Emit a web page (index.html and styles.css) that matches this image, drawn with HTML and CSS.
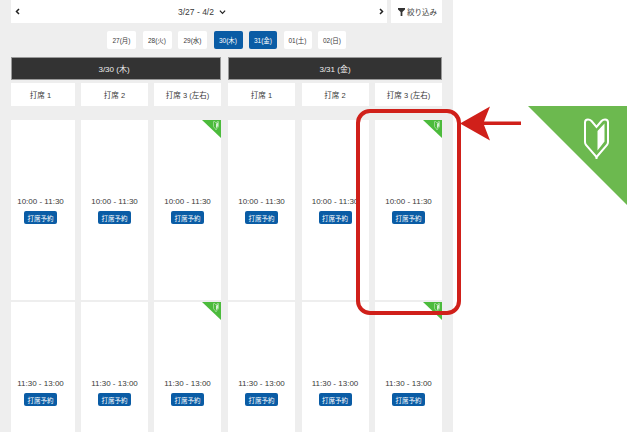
FILE: index.html
```html
<!DOCTYPE html>
<html lang="ja">
<head>
<meta charset="utf-8">
<title>打席予約</title>
<link rel="stylesheet" href="styles.css">
</head>
<body>
<svg class="defs" width="0" height="0">
  <symbol id="leaf" viewBox="0 0 27 41">
    <path d="M2 4.500 Q2 1.500 5 1.500 Q7 1.500 8.500 3 L13.500 9 L18.500 3 Q20 1.500 22 1.500 Q25 1.500 25 4.500 V24 Q25 25.500 24 27 L14 38.500 L13.500 39 L3 27 Q2 25.500 2 24 Z" fill="none" stroke="currentColor" stroke-width="2"/>
    <path d="M14.500 13 L21.500 5.500 V23.500 L14.500 32.500 V41 H12.500 V38 H14.500 Z" fill="currentColor"/>
  </symbol>
</svg>
<main class="page">
  <div class="topbar">
    <div class="weekbar">
      <svg class="nav" viewBox="0 0 5 7"><path d="M4 1 L1.500 3.500 L4 6" fill="none" stroke="#222" stroke-width="1.500"/></svg>
      <span class="range">3/27 - 4/2 <svg class="chev" viewBox="0 0 8 6"><path d="M1 1.500 L4 4.500 L7 1.500" fill="none" stroke="#222" stroke-width="1.400"/></svg></span>
      <svg class="nav" viewBox="0 0 5 7"><path d="M1 1 L3.500 3.500 L1 6" fill="none" stroke="#222" stroke-width="1.500"/></svg>
    </div>
    <div class="filter"><svg class="funnel" viewBox="0 0 8 9"><path d="M0 0 H8 V1.500 L5 4.500 V9 H3 V4.500 L0 1.500 Z" fill="#333"/></svg>絞り込み</div>
  </div>
  <div class="dates">
    <span class="pill">27(月)</span>
    <span class="pill">28(火)</span>
    <span class="pill">29(水)</span>
    <span class="pill on">30(木)</span>
    <span class="pill on narrow">31(金)</span>
    <span class="pill narrow">01(土)</span>
    <span class="pill narrow">02(日)</span>
  </div>
  <div class="days">
    <section class="day first">
      <h2 class="dayhead">3/30 (木)</h2>
      <div class="seat">打席 1</div><div class="seat">打席 2</div><div class="seat">打席 3 (左右)</div>
      <div class="slot s1"><span class="time">10:00 - 11:30</span><a class="book">打席予約</a></div>
      <div class="slot s1"><span class="time">10:00 - 11:30</span><a class="book">打席予約</a></div>
      <div class="slot s1"><i class="badge"><svg class="mini"><use href="#leaf"/></svg></i><span class="time">10:00 - 11:30</span><a class="book">打席予約</a></div>
      <div class="slot s2"><span class="time">11:30 - 13:00</span><a class="book">打席予約</a></div>
      <div class="slot s2"><span class="time">11:30 - 13:00</span><a class="book">打席予約</a></div>
      <div class="slot s2"><i class="badge"><svg class="mini"><use href="#leaf"/></svg></i><span class="time">11:30 - 13:00</span><a class="book">打席予約</a></div>
    </section>
    <section class="day">
      <h2 class="dayhead">3/31 (金)</h2>
      <div class="seat">打席 1</div><div class="seat">打席 2</div><div class="seat">打席 3 (左右)</div>
      <div class="slot s1"><span class="time">10:00 - 11:30</span><a class="book">打席予約</a></div>
      <div class="slot s1"><span class="time">10:00 - 11:30</span><a class="book">打席予約</a></div>
      <div class="slot s1"><i class="badge"><svg class="mini"><use href="#leaf"/></svg></i><span class="time">10:00 - 11:30</span><a class="book">打席予約</a></div>
      <div class="slot s2"><span class="time">11:30 - 13:00</span><a class="book">打席予約</a></div>
      <div class="slot s2"><span class="time">11:30 - 13:00</span><a class="book">打席予約</a></div>
      <div class="slot s2"><i class="badge"><svg class="mini"><use href="#leaf"/></svg></i><span class="time">11:30 - 13:00</span><a class="book">打席予約</a></div>
    </section>
  </div>
</main>
<div class="callout"></div>
<svg class="arrow" viewBox="0 0 62 36"><path d="M0 17.500 L30 0.500 L24 15.500 H61 V19 H24 L30 34.500 Z" fill="#d0201a"/></svg>
<div class="corner"><svg class="big"><use href="#leaf"/></svg></div>
</body>
</html>
```
FILE: styles.css
```css
* { box-sizing: border-box; }
html, body { margin: 0; height: 432px; overflow: hidden; background: #fff; }
body { font-family: "Liberation Sans", "Noto Sans CJK JP", sans-serif; color: #3a3a3a; position: relative; }
.defs { position: absolute; }
.page { width: 453px; height: 432px; background: #eee; padding: 0 11px; overflow: hidden; }
.topbar { display: flex; gap: 4px; height: 23px; }
.weekbar { width: 376px; background: #fff; display: flex; align-items: center; justify-content: space-between; padding: 0 3px 0 4px; }
.nav { width: 5px; height: 7px; }
.range { font-size: 8.500px; margin-left: 5px; display: flex; align-items: center; gap: 5px; }
.chev { width: 7px; height: 6px; }
.filter { flex: 1; background: #fff; display: flex; align-items: center; padding-left: 7px; gap: 2px; font-size: 7.500px; }
.funnel { width: 7px; height: 8px; }
.dates { display: flex; justify-content: center; gap: 6.500px; margin: 8px 0 8px; height: 18px; }
.pill { width: 29px; height: 18px; background: #fff; border-radius: 2px; font-size: 6.500px; display: flex; align-items: center; justify-content: center; }
.pill.narrow { width: 28px; }
.pill.on { background: #0a5ca5; color: #fff; }
.days { display: flex; gap: 7px; }
.day { display: grid; grid-template-columns: 67px 67px 67px; column-gap: 6.500px; }
.day.first { grid-template-columns: 64px 67px 67px; column-gap: 6px; }
.dayhead { grid-column: 1 / -1; margin: 0 0 3px; height: 23px; background: #333; border: 1px solid #999; color: #eee; font-size: 8px; font-weight: normal; display: flex; align-items: center; justify-content: center; }
.first .dayhead { padding-right: 4px; }
.seat { height: 23px; margin-bottom: 14px; background: #fff; font-size: 7.500px; display: flex; align-items: center; justify-content: center; }
.first .seat:nth-of-type(1), .first .slot:nth-of-type(3n+1) { padding-right: 5px; }
.slot { position: relative; height: 180px; background: #fff; display: flex; flex-direction: column; align-items: center; padding-top: 77px; margin-bottom: 2px; }
.time { font-size: 8px; line-height: 10px; }
.book { margin-top: 4px; width: 33px; height: 13px; background: #0a5ca5; border-radius: 2px; color: #fff; font-size: 6.500px; display: flex; align-items: center; justify-content: center; }
.badge { position: absolute; top: 0; right: 0; width: 19px; height: 18px; background: #4cbb3c; clip-path: polygon(0 0, 100% 0, 100% 100%); }
.mini { position: absolute; top: 1px; right: 2px; width: 6px; height: 9px; color: #fff; }
.callout { position: absolute; left: 356px; top: 109px; width: 105px; height: 206px; border: 4px solid #d0201a; border-radius: 14px; }
.arrow { position: absolute; left: 460px; top: 106px; width: 62px; height: 36px; }
.corner { position: absolute; left: 528px; top: 106px; width: 99px; height: 99px; background: #6cb94f; clip-path: polygon(0 0, 100% 0, 100% 100%); }
.big { position: absolute; left: 55px; top: 12px; width: 27px; height: 41px; color: #fff; }
```
